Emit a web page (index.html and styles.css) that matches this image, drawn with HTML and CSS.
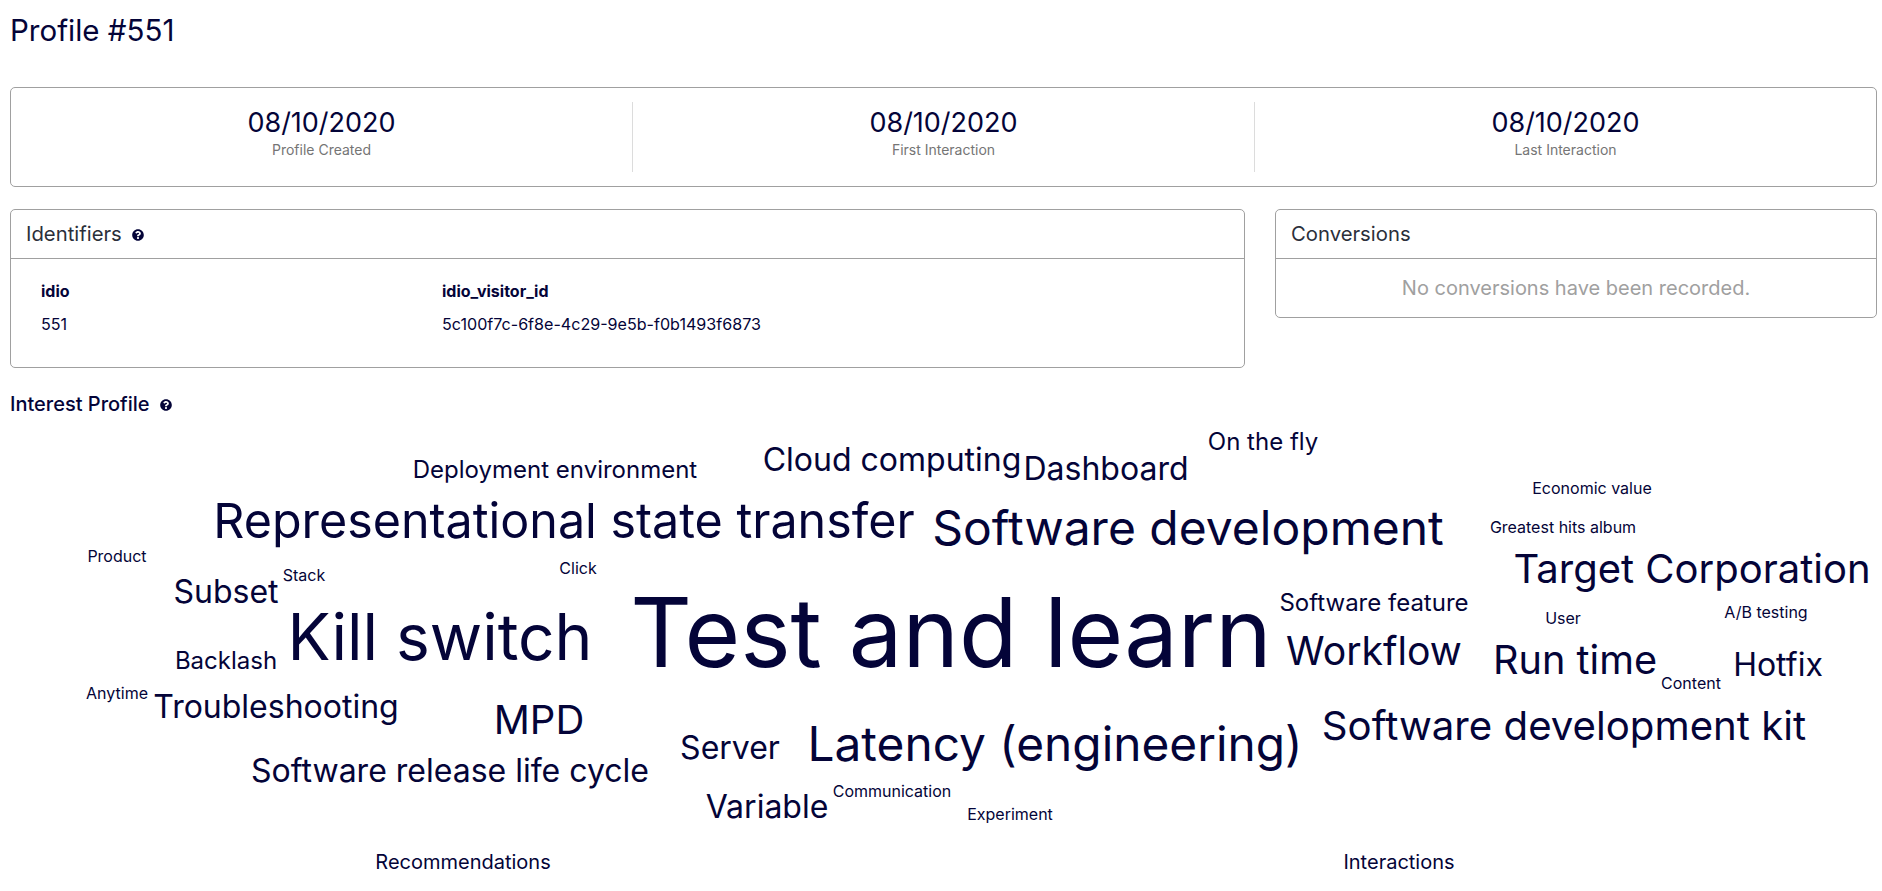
FILE: index.html
```html
<!DOCTYPE html>
<html lang="en">
<head>
<meta charset="utf-8">
<title>Profile #551</title>
<link rel="stylesheet" href="styles.css">
</head>
<body>
<h1 class="title">Profile #551</h1>
<section class="card stats">
  <div class="stat"><div class="stat-value">08/10/2020</div><div class="stat-label">Profile Created</div></div>
  <div class="stat"><div class="stat-value">08/10/2020</div><div class="stat-label">First Interaction</div></div>
  <div class="stat"><div class="stat-value">08/10/2020</div><div class="stat-label">Last Interaction</div></div>
</section>
<div class="row">
  <section class="card identifiers">
    <header class="card-head">Identifiers <svg class="help" viewBox="0 0 512 512"><path d="M504 256c0 136.997-111.043 248-248 248S8 392.997 8 256C8 119.083 119.043 8 256 8s248 111.083 248 248zM262.655 90c-54.497 0-89.255 22.957-116.549 63.758-3.536 5.286-2.353 12.415 2.715 16.258l34.699 26.310c5.205 3.947 12.621 3.008 16.665-2.122 17.864-22.658 30.113-35.797 57.303-35.797 20.429 0 45.698 13.148 45.698 32.958 0 14.976-12.363 22.667-32.534 33.976C247.128 238.528 216 254.941 216 296v4c0 6.627 5.373 12 12 12h56c6.627 0 12-5.373 12-12v-1.333c0-28.462 83.186-29.647 83.186-106.667 0-58.002-60.165-102-116.531-102zM256 338c-25.365 0-46 20.635-46 46 0 25.364 20.635 46 46 46s46-20.636 46-46c0-25.365-20.635-46-46-46z"/></svg></header>
    <div class="id-grid">
      <div class="id-col"><div class="id-key">idio</div><div class="id-val">551</div></div>
      <div class="id-col"><div class="id-key">idio_visitor_id</div><div class="id-val">5c100f7c-6f8e-4c29-9e5b-f0b1493f6873</div></div>
    </div>
  </section>
  <section class="card conversions">
    <header class="card-head">Conversions</header>
    <div class="empty">No conversions have been recorded.</div>
  </section>
</div>
<h2 class="interest">Interest Profile <svg class="help" viewBox="0 0 512 512"><path d="M504 256c0 136.997-111.043 248-248 248S8 392.997 8 256C8 119.083 119.043 8 256 8s248 111.083 248 248zM262.655 90c-54.497 0-89.255 22.957-116.549 63.758-3.536 5.286-2.353 12.415 2.715 16.258l34.699 26.310c5.205 3.947 12.621 3.008 16.665-2.122 17.864-22.658 30.113-35.797 57.303-35.797 20.429 0 45.698 13.148 45.698 32.958 0 14.976-12.363 22.667-32.534 33.976C247.128 238.528 216 254.941 216 296v4c0 6.627 5.373 12 12 12h56c6.627 0 12-5.373 12-12v-1.333c0-28.462 83.186-29.647 83.186-106.667 0-58.002-60.165-102-116.531-102zM256 338c-25.365 0-46 20.635-46 46 0 25.364 20.635 46 46 46s46-20.636 46-46c0-25.365-20.635-46-46-46z"/></svg></h2>
<svg class="cloud" viewBox="0 0 1882 891" width="1882" height="891">
  <text x="951" y="667" font-size="95.600">Test and learn</text>
  <text x="440" y="660" font-size="64">Kill switch</text>
  <text x="564" y="538" font-size="48.400">Representational state transfer</text>
  <text x="1188" y="545" font-size="48">Software development</text>
  <text x="1692" y="583" font-size="40">Target Corporation</text>
  <text x="1055" y="761" font-size="47.800">Latency (engineering)</text>
  <text x="1564" y="740" font-size="40.200">Software development kit</text>
  <text x="1374" y="665" font-size="39.200">Workflow</text>
  <text x="1575" y="674" font-size="39.700">Run time</text>
  <text x="1778" y="676" font-size="32">Hotfix</text>
  <text x="539" y="734" font-size="40">MPD</text>
  <text x="276" y="718" font-size="32">Troubleshooting</text>
  <text x="450" y="782" font-size="32">Software release life cycle</text>
  <text x="730" y="759" font-size="32">Server</text>
  <text x="767" y="818" font-size="32">Variable</text>
  <text x="226" y="603" font-size="32">Subset</text>
  <text x="226" y="669" font-size="24">Backlash</text>
  <text x="892" y="471" font-size="32">Cloud computing</text>
  <text x="1106" y="480" font-size="32">Dashboard</text>
  <text x="555" y="478" font-size="24">Deployment environment</text>
  <text x="1263" y="450" font-size="24">On the fly</text>
  <text x="1374" y="611" font-size="24">Software feature</text>
  <text x="1592" y="494" font-size="16">Economic value</text>
  <text x="1563" y="533" font-size="16">Greatest hits album</text>
  <text x="1766" y="618" font-size="16">A/B testing</text>
  <text x="1563" y="624" font-size="16">User</text>
  <text x="1691" y="689" font-size="16">Content</text>
  <text x="117" y="562" font-size="16">Product</text>
  <text x="304" y="581" font-size="16">Stack</text>
  <text x="578" y="574" font-size="16">Click</text>
  <text x="117" y="699" font-size="16">Anytime</text>
  <text x="892" y="797" font-size="16">Communication</text>
  <text x="1010" y="820" font-size="16">Experiment</text>
</svg>
<div class="tabs">
  <div class="tab">Recommendations</div>
  <div class="tab">Interactions</div>
</div>
</body>
</html>
```
FILE: styles.css
```css
html, body { margin: 0; padding: 0; }
body {
  position: relative;
  width: 1882px;
  height: 891px;
  overflow: hidden;
  background: #fff;
  color: #040438;
  font-family: Inter, "Liberation Sans", sans-serif;
  padding: 0 5px 0 10px;
  box-sizing: border-box;
}
.title { margin: 0; padding-top: 13px; height: 87px; box-sizing: border-box; font-size: 29.500px; line-height: 34px; font-weight: 400; }
.card { border: 1px solid #a0a0a0; border-radius: 5px; box-sizing: border-box; background: #fff; }
.stats { display: flex; height: 100px; padding: 14px 0; }
.stat { flex: 1; text-align: center; border-left: 1px solid #dcdcdc; }
.stat:first-child { border-left: 0; }
.stat-value { font-size: 27px; line-height: 32px; margin-top: 5px; }
.stat-label { font-size: 14px; line-height: 20px; margin-top: 1px; color: #757575; }
.row { display: flex; align-items: flex-start; gap: 30px; margin-top: 22px; }
.identifiers { width: 1235px; height: 159px; }
.conversions { width: 602px; height: 109px; }
.card-head { height: 49px; padding: 0 15px 2px; display: flex; align-items: center; gap: 10px; border-bottom: 1px solid #a0a0a0; font-size: 20.300px; color: #2b2f3a; box-sizing: border-box; }
.help { width: 12px; height: 12px; margin-top: 4px; fill: #040438; flex: none; }
.id-grid { display: flex; padding: 22px 30px; }
.id-col:first-child { width: 401px; }
.id-key { font-size: 16px; line-height: 20px; font-weight: 700; }
.id-val { font-size: 16.100px; line-height: 20px; margin-top: 13px; }
.empty { text-align: center; font-size: 20px; line-height: 28px; padding-top: 15px; color: #a0a0a0; }
.interest { margin: 24px 0 0; font-size: 20px; line-height: 24px; font-weight: 500; display: flex; align-items: center; gap: 10px; }
.interest .help { margin-top: 2px; }
.cloud { position: absolute; left: 0; top: 0; fill: #040438; font-family: Inter, "Liberation Sans", sans-serif; text-anchor: middle; pointer-events: none; }
.tabs { display: flex; position: absolute; left: 0; right: 0; top: 850px; }
.tab { position: absolute; font-size: 20px; line-height: 24px; transform: translateX(-50%); }
.tab:first-child { left: 463px; }
.tab:last-child { left: 1399px; }
```
